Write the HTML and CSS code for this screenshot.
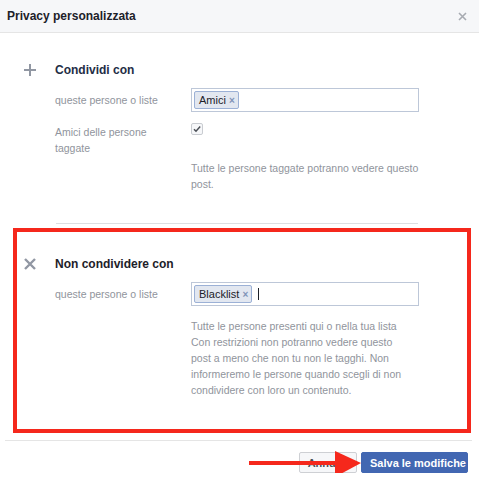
FILE: index.html
```html
<!DOCTYPE html>
<html lang="it">

<head>
    <meta charset="UTF-8">
    <meta name="viewport" content="width=device-width, initial-scale=1.0">
    <title>Privacy personalizzata</title>
    <link rel="stylesheet" href="styles.css">
</head>

<body>
    <div class="dialog">
        <div class="header">
            <span class="title">Privacy personalizzata</span>
            <svg class="close" width="9" height="9" viewBox="0 0 9 9">
                <path d="M1 1L8 8M8 1L1 8" stroke="#a7abb2" stroke-width="1.6" />
            </svg>
        </div>

        <div class="section share">
            <div class="head">
                <svg class="icon" width="14" height="14" viewBox="0 0 14 14">
                    <path d="M7 1V13M1 7H13" stroke="#9197a3" stroke-width="2" />
                </svg>
                <span class="head-title">Condividi con</span>
            </div>
            <div class="row">
                <div class="label">queste persone o liste</div>
                <div class="field">
                    <span class="tag">Amici <span class="tag-x">&times;</span></span>
                </div>
            </div>
            <div class="row row-top">
                <div class="label">Amici delle persone<br>taggate</div>
                <div class="check">
                    <svg width="10" height="10" viewBox="0 0 10 10">
                        <path d="M2 5.2L4 7.2L8.2 2.6" stroke="#4b4f56" stroke-width="1.5" fill="none" />
                    </svg>
                </div>
            </div>
            <p class="help">Tutte le persone taggate potranno vedere questo<br>post.</p>
            <div class="divider"></div>
        </div>

        <div class="section block">
            <div class="head">
                <svg class="icon" width="14" height="14" viewBox="0 0 14 14">
                    <path d="M2 2L12 12M12 2L2 12" stroke="#9197a3" stroke-width="2.4" />
                </svg>
                <span class="head-title dark">Non condividere con</span>
            </div>
            <div class="row">
                <div class="label">queste persone o liste</div>
                <div class="field">
                    <span class="tag">Blacklist <span class="tag-x">&times;</span></span>
                    <span class="caret"></span>
                </div>
            </div>
            <p class="help help-long">Tutte le persone presenti qui o nella tua lista<br>Con restrizioni non potranno vedere questo<br>post a meno che non tu non le tagghi. Non<br>informeremo le persone quando scegli di non<br>condividere con loro un contenuto.</p>
        </div>

        <div class="footer">
            <button class="btn">Annulla</button>
            <button class="btn btn-blue">Salva le modifiche</button>
            <svg class="arrow" width="120" height="28" viewBox="0 0 120 28">
                <path d="M0 12H90" stroke="#f5281c" stroke-width="4" />
                <path d="M86 0L112 12L86 26Z" fill="#f5281c" />
            </svg>
        </div>
    </div>
</body>

</html>
```

FILE: styles.css
```css
body {
    margin: 0;
    background: #fff;
    font-family: "Liberation Sans", Arial, sans-serif;
    font-size: 10.5px;
    color: #1d2129;
}

.dialog {
    width: 479px;
}

.header {
    height: 32px;
    border-bottom: 1px solid #e5e5e5;
    background-color: #f6f7f9;
    display: flex;
    align-items: center;
    justify-content: space-between;
    padding: 0 12px 0 7px;
}

.title {
    font-size: 12px;
    font-weight: bold;
    color: #1d2129;
}

.section {
    padding-left: 23px;
}

.share {
    padding-top: 29px;
}

.head {
    display: flex;
    align-items: center;
    height: 16px;
}

.icon {
    width: 14px;
    margin-right: 18px;
}

.head-title {
    font-size: 12px;
    font-weight: bold;
    color: #232d45;
}

.head-title.dark {
    color: #1d2129;
}

.row {
    display: flex;
    align-items: center;
    padding-left: 32px;
    margin-top: 10px;
}

.row-top {
    align-items: flex-start;
    margin-top: 12px;
}

.label {
    width: 136px;
    color: #90949c;
    line-height: 16px;
}

.field {
    width: 224px;
    height: 22px;
    border: 1px solid #bdc7d8;
    display: flex;
    align-items: center;
    padding-left: 2px;
}

.tag {
    display: inline-block;
    height: 16px;
    line-height: 16px;
    padding: 0 3px 0 4px;
    font-size: 11px;
    background-color: #e2e7f0;
    border: 1px solid #9cb1d6;
    border-radius: 2px;
    color: #1d2129;
}

.tag-x {
    color: #7f93b8;
    font-size: 10px;
    font-weight: bold;
}

.caret {
    display: inline-block;
    width: 1px;
    height: 12px;
    background-color: #1d2129;
    margin-left: 6px;
}

.check {
    width: 10px;
    height: 10px;
    margin-top: -1px;
    border: 1px solid #c9ccd1;
    border-radius: 2px;
    background-color: #f6f7f9;
    display: flex;
    align-items: center;
    justify-content: center;
}

.help {
    margin: 4px 0 0 168px;
    color: #90949c;
    line-height: 16px;
}

.divider {
    margin: 31px 0 0 33px;
    width: 362px;
    height: 1px;
    background-color: #dddfe2;
}

.block {
    margin: 4px 8px 0 13px;
    border: 4px solid #f5281c;
    padding: 24px 0 31px 6px;
}

.help-long {
    margin-top: 12px;
}

.footer {
    position: relative;
    margin: 7px 7px 0 5px;
    border-top: 1px solid #e5e5e5;
    padding: 11px 4px 0 0;
    display: flex;
    justify-content: flex-end;
    gap: 4px;
}

.btn {
    height: 21px;
    padding: 0 8px;
    font-family: "Liberation Sans", Arial, sans-serif;
    font-size: 11px;
    font-weight: bold;
    white-space: nowrap;
    color: #4b4f56;
    background-color: #f6f7f9;
    border: 1px solid #ced0d4;
    border-radius: 2px;
}

.btn-blue {
    width: 107px;
    color: #fff;
    background-color: #4267b2;
    border-color: #4267b2;
}

.arrow {
    position: absolute;
    left: 244px;
    top: 10px;
}
```
